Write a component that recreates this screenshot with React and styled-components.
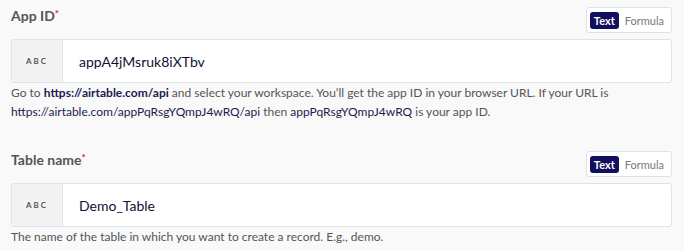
import React from 'react'
import styled, { createGlobalStyle } from 'styled-components'

const GlobalStyle = createGlobalStyle`
  *, *::before, *::after {
    box-sizing: border-box;
  }
  body {
    margin: 0;
    background-color: #f9f9f9;
    font-family: Lato, "Open Sans", sans-serif;
  }
`

const Page = styled.div`
  padding: 7px 12px 0 11px;
`

const Field = styled.div`
  margin-bottom: 30px;
`

const Header = styled.div`
  display: flex;
  justify-content: space-between;
  align-items: flex-start;
`

const Label = styled.label`
  font-size: 14px;
  line-height: 17px;
  font-weight: 700;
  color: #555;
`

const Required = styled.span`
  color: #e02424;
  font-size: 10px;
  vertical-align: top;
  position: relative;
  top: -2px;
`

const Toggle = styled.div`
  display: flex;
  align-items: center;
  gap: 6px;
  height: 26px;
  padding: 0 7px 0 3px;
  border: 1px solid #dde3ea;
  border-radius: 3px;
  background-color: #fff;
`

const ToggleOption = styled.span`
  font-size: 11px;
  line-height: 17px;
  padding: 0 ${p => (p.active ? '4px' : '0')};
  border-radius: 3px;
  color: ${p => (p.active ? '#fff' : '#777')};
  background-color: ${p => (p.active ? '#120f5e' : 'transparent')};
  font-weight: ${p => (p.active ? 700 : 400)};
`

const InputBox = styled.div`
  display: flex;
  height: 44px;
  margin-top: 6px;
  border: 1px solid #dde3ea;
  border-radius: 3px;
  background-color: #fff;
  overflow: hidden;
`

const TypeTag = styled.div`
  width: 51px;
  flex-shrink: 0;
  display: flex;
  align-items: center;
  justify-content: center;
  background-color: #f3f3f3;
  border-right: 1px solid #dde3ea;
  font-size: 8px;
  font-weight: 700;
  letter-spacing: 2px;
  color: #555;
`

const Value = styled.div`
  display: flex;
  align-items: center;
  padding-left: 16px;
  font-size: 14px;
  color: #111133;
`

const Help = styled.div`
  font-size: 12px;
  line-height: 19px;
  color: #555;
`

const Link = styled.span`
  color: #1b1b4f;
  font-weight: ${p => (p.bold ? 700 : 400)};
`

const fields = [
  {
    label: 'App ID',
    value: 'appA4jMsruk8iXTbv',
    help: (
      <>
        Go to <Link bold>https://airtable.com/api</Link> and select your workspace. You’ll get the app ID in your browser URL. If your URL is{' '}
        <Link>https://airtable.com/appPqRsgYQmpJ4wRQ/api</Link> then <Link>appPqRsgYQmpJ4wRQ</Link> is your app ID.
      </>
    ),
  },
  {
    label: 'Table name',
    value: 'Demo_Table',
    help: 'The name of the table in which you want to create a record. E.g., demo.',
  },
]

const App = () => {
  return (
    <Page>
      <GlobalStyle />
      {fields.map(f => (
        <Field key={f.label}>
          <Header>
            <Label>
              {f.label}
              <Required>*</Required>
            </Label>
            <Toggle>
              <ToggleOption active>Text</ToggleOption>
              <ToggleOption>Formula</ToggleOption>
            </Toggle>
          </Header>
          <InputBox>
            <TypeTag>ABC</TypeTag>
            <Value>{f.value}</Value>
          </InputBox>
          <Help>{f.help}</Help>
        </Field>
      ))}
    </Page>
  )
}

export default App
